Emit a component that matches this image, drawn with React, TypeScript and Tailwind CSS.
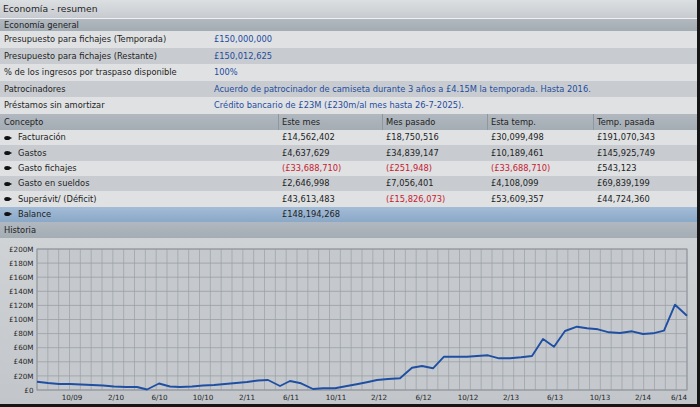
import React from 'react';

const general = [
  ['Presupuesto para fichajes (Temporada)', '£150,000,000'],
  ['Presupuesto para fichajes (Restante)', '£150,012,625'],
  ['% de los ingresos por traspaso disponible', '100%'],
  ['Patrocinadores', 'Acuerdo de patrocinador de camiseta durante 3 años a £4.15M la temporada. Hasta 2016.'],
  ['Préstamos sin amortizar', 'Crédito bancario de £23M (£230m/al mes hasta 26-7-2025).'],
];

const rows = [
  ['Facturación', '£14,562,402', '£18,750,516', '£30,099,498', '£191,070,343'],
  ['Gastos', '£4,637,629', '£34,839,147', '£10,189,461', '£145,925,749'],
  ['Gasto fichajes', '(£33,688,710)', '(£251,948)', '(£33,688,710)', '£543,123'],
  ['Gasto en sueldos', '£2,646,998', '£7,056,401', '£4,108,099', '£69,839,199'],
  ['Superávit/ (Déficit)', '£43,613,483', '(£15,826,073)', '£53,609,357', '£44,724,360'],
  ['Balance', '£148,194,268', '', '', ''],
];

const points: [number, number][] = [
  [37, 381.7], [48, 383], [59, 384], [70, 384], [81, 384.5], [92, 385], [103, 385.5], [114, 386.5],
  [126, 387], [137, 387], [147, 389.5], [159, 383.5], [170, 386.5], [180, 387], [192, 386.5],
  [203, 385.5], [214, 385], [225, 384], [236, 383], [247, 382], [258, 380.5], [268, 380], [280, 386],
  [290, 381], [301, 383.3], [313, 389], [323, 388.3], [335, 388.3], [347, 386], [358, 384], [368, 382],
  [377, 380], [388, 379], [400, 378.3], [412, 367.7], [422, 366], [433, 368.3], [444, 356.7],
  [455, 356.7], [467, 356.7], [477, 356], [488, 355.3], [499, 358.3], [510, 358.3], [521, 357.3],
  [532, 356], [543, 339], [554, 346.7], [565, 331], [577, 326.7], [587, 328.3], [598, 329.3],
  [609, 332.3], [620, 333], [632, 331.3], [643, 334], [653, 333.3], [664, 330.7], [675, 304.7],
  [687, 315.7],
];

const xLabels: [string, number][] = [
  ['10/09', 72], ['2/10', 116], ['6/10', 159.5], ['10/10', 203], ['2/11', 247], ['6/11', 291],
  ['10/11', 336], ['2/12', 379], ['6/12', 423.5], ['10/12', 468], ['2/13', 511], ['6/13', 555],
  ['10/13', 600], ['2/14', 643], ['6/14', 679],
];

const Bullet = () => (
  <svg width="9" height="6" viewBox="0 0 9 6" className="mr-[5px] shrink-0">
    <ellipse cx="3.2" cy="3" rx="3" ry="2.1" fill="#111" />
    <path d="M5 1.4 L8.2 3 L5 4.6 Z" fill="#111" />
  </svg>
);

const Chart = () => {
  const top = 249;
  const bottom = 390;
  const left = 37;
  const right = 687;
  const hStep = (bottom - top) / 10;
  const vStep = (right - left) / 60;
  return (
    <svg width="697" height="166" viewBox="0 238 697 166" className="block">
      <rect x={left} y={top} width={right - left} height={bottom - top} fill="#c5c9cd" />
      {Array.from({ length: 61 }, (_, i) => (
        <line key={'v' + i} x1={left + i * vStep} x2={left + i * vStep} y1={top} y2={bottom} stroke="#a0a5aa" strokeWidth="0.8" />
      ))}
      {Array.from({ length: 11 }, (_, i) => (
        <line key={'h' + i} x1={left} x2={right} y1={top + i * hStep} y2={top + i * hStep} stroke="#9a9fa5" strokeWidth="0.8" />
      ))}
      <rect x={left} y={top} width={right - left} height={bottom - top} fill="none" stroke="#90959b" strokeWidth="1" />
      {Array.from({ length: 11 }, (_, i) => (
        <text key={'y' + i} x="33.5" y={top + i * hStep + 2.6} textAnchor="end" fontSize="7.2" fill="#262626" fontFamily="DejaVu Sans, sans-serif">
          {i === 10 ? '£0' : `£${200 - i * 20}M`}
        </text>
      ))}
      {xLabels.map(([t, x]) => (
        <text key={t} x={x} y="399.5" textAnchor="middle" fontSize="7.2" fill="#262626" fontFamily="DejaVu Sans, sans-serif">
          {t}
        </text>
      ))}
      <polyline points={points.map((p) => p.join(',')).join(' ')} fill="none" stroke="#1f4fa3" strokeWidth="1.9" strokeLinejoin="round" />
    </svg>
  );
};

export default function App() {
  return (
    <div className="w-[700px] h-[407px] overflow-hidden bg-[#161616] font-['DejaVu_Sans',sans-serif] text-[8.3px] text-[#1e1e1e]">
      <div className="w-[697px] h-[404px] flex flex-col bg-[#c7cbcf]">
        <div className="h-[19px] flex items-center px-[3px] text-[9.2px] bg-gradient-to-b from-[#dcdfe2] to-[#c7cbcf] border-b border-[#eef0f2]">
          Economía - resumen
        </div>
        <div className="h-[12px] flex items-center px-[4px] bg-gradient-to-b from-[#b1b8bf] to-[#a4acb4]">
          Economía general
        </div>
        {general.map(([label, value], i) => (
          <div key={label} className={`h-[16.6px] flex items-center ${i % 2 === 0 ? 'bg-[#dfe1e3]' : 'bg-[#c8ccd0]'}`}>
            <div className="w-[214px] pl-[4px] shrink-0">{label}</div>
            <div className="text-[#1f4c9e] whitespace-nowrap">{value}</div>
          </div>
        ))}
        <div className="h-[16px] grid grid-cols-[278px_104px_105px_106px_1fr] bg-gradient-to-b from-[#b1b8bf] to-[#a4acb4]">
          {['Concepto', 'Este mes', 'Mes pasado', 'Esta temp.', 'Temp. pasada'].map((h, i) => (
            <div key={h} className={`flex items-center ${i === 0 ? 'pl-[4px]' : 'pl-[3px] border-l border-[#8f979f]'}`}>
              {h}
            </div>
          ))}
        </div>
        {rows.map((r, i) => {
          const bg = i === 5 ? 'bg-gradient-to-b from-[#a4bcd6] to-[#8aa8c8]' : i % 2 === 0 ? 'bg-[#dfe1e3]' : 'bg-[#c8ccd0]';
          return (
            <div key={r[0]} className={`h-[15.33px] grid grid-cols-[278px_104px_105px_106px_1fr] ${bg}`}>
              <div className="flex items-center pl-[4px]">
                <Bullet />
                {r[0]}
              </div>
              {r.slice(1).map((v, j) => (
                <div key={j} className={`flex items-center pl-[4px] ${v.startsWith('(') ? 'text-[#c8202e]' : ''}`}>
                  {v}
                </div>
              ))}
            </div>
          );
        })}
        <div className="h-[16px] flex items-center px-[4px] bg-gradient-to-b from-[#b1b8bf] to-[#a4acb4]">Historia</div>
        <div className="flex-1 bg-gradient-to-b from-[#d0d3d6] to-[#c2c6ca]">
          <Chart />
        </div>
      </div>
    </div>
  );
}
